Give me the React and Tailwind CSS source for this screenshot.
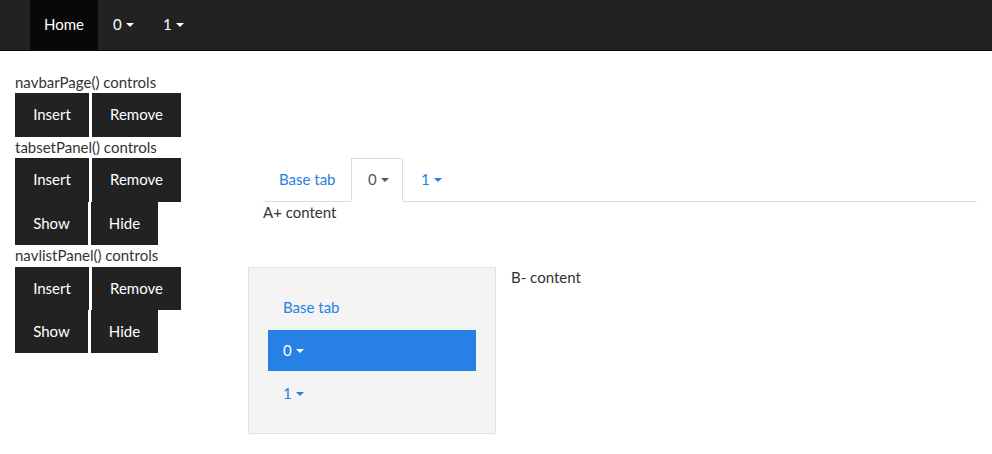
import React from "react";

const Caret = () => (
  <span className="inline-block w-0 h-0 ml-[4px] align-middle border-t-[4px] border-x-[4px] border-t-current border-x-transparent" />
);

const DarkButton = ({ label, width }) => (
  <button className={`${width} h-[43.43px] bg-[#222222] text-white text-[15px] border border-[#222222]`}>
    {label}
  </button>
);

const App = () => {
  return (
    <div className="min-h-screen bg-white text-[#333333] text-[15px] leading-[21.43px] font-['Lato',sans-serif]">
      {/* Navbar */}
      <div className="h-[51px] bg-[#222222] border-b border-[#080808] flex pl-[30px]">
        <div className="w-[68px] h-[50px] flex items-center justify-center bg-[#080808] text-white">Home</div>
        <div className="w-[50px] h-[50px] pl-[15px] flex items-center text-white">
          0<Caret />
        </div>
        <div className="w-[50px] h-[50px] pl-[15px] flex items-center text-white">
          1<Caret />
        </div>
      </div>

      <div className="flex mt-[21px]">
        {/* Controls column */}
        <div className="w-[248px] px-[15px]">
          <div>navbarPage() controls</div>
          <div className="flex gap-[3px]">
            <DarkButton label="Insert" width="w-[74px]" />
            <DarkButton label="Remove" width="w-[89px]" />
          </div>
          <div>tabsetPanel() controls</div>
          <div className="flex gap-[3px]">
            <DarkButton label="Insert" width="w-[74px]" />
            <DarkButton label="Remove" width="w-[89px]" />
          </div>
          <div className="flex gap-[3px]">
            <DarkButton label="Show" width="w-[73px]" />
            <DarkButton label="Hide" width="w-[67px]" />
          </div>
          <div>navlistPanel() controls</div>
          <div className="flex gap-[3px]">
            <DarkButton label="Insert" width="w-[74px]" />
            <DarkButton label="Remove" width="w-[89px]" />
          </div>
          <div className="flex gap-[3px]">
            <DarkButton label="Show" width="w-[73px]" />
            <DarkButton label="Hide" width="w-[67px]" />
          </div>
        </div>

        {/* Main column */}
        <div className="flex-1">
          <div className="mx-[15px] mt-[86px]">
            {/* Tabset */}
            <div className="flex gap-[2px] h-[44px] border-b border-[#dddddd]">
              <div className="w-[86px] h-[44px] pl-[16px] flex items-center text-[#2780e3]">Base tab</div>
              <div className="w-[52px] h-[44px] pl-[16px] flex items-center bg-white border border-[#dddddd] border-b-white text-[#555555]">
                0<Caret />
              </div>
              <div className="w-[52px] h-[44px] pl-[16px] flex items-center text-[#2780e3]">
                1<Caret />
              </div>
            </div>
            <div>A+ content</div>
          </div>

          {/* Navlist */}
          <div className="flex mt-[44px]">
            <div className="w-[248px] h-[167px] bg-[#f4f4f4] border border-[#e3e3e3] p-[19px] flex flex-col gap-[2px]">
              <div className="h-[41px] px-[15px] flex items-center text-[#2780e3]">Base tab</div>
              <div className="h-[41px] px-[15px] flex items-center bg-[#2780e3] text-white">
                0<Caret />
              </div>
              <div className="h-[41px] px-[15px] flex items-center text-[#2780e3]">
                1<Caret />
              </div>
            </div>
            <div className="px-[15px]">B- content</div>
          </div>
        </div>
      </div>
    </div>
  );
};

export default App;
